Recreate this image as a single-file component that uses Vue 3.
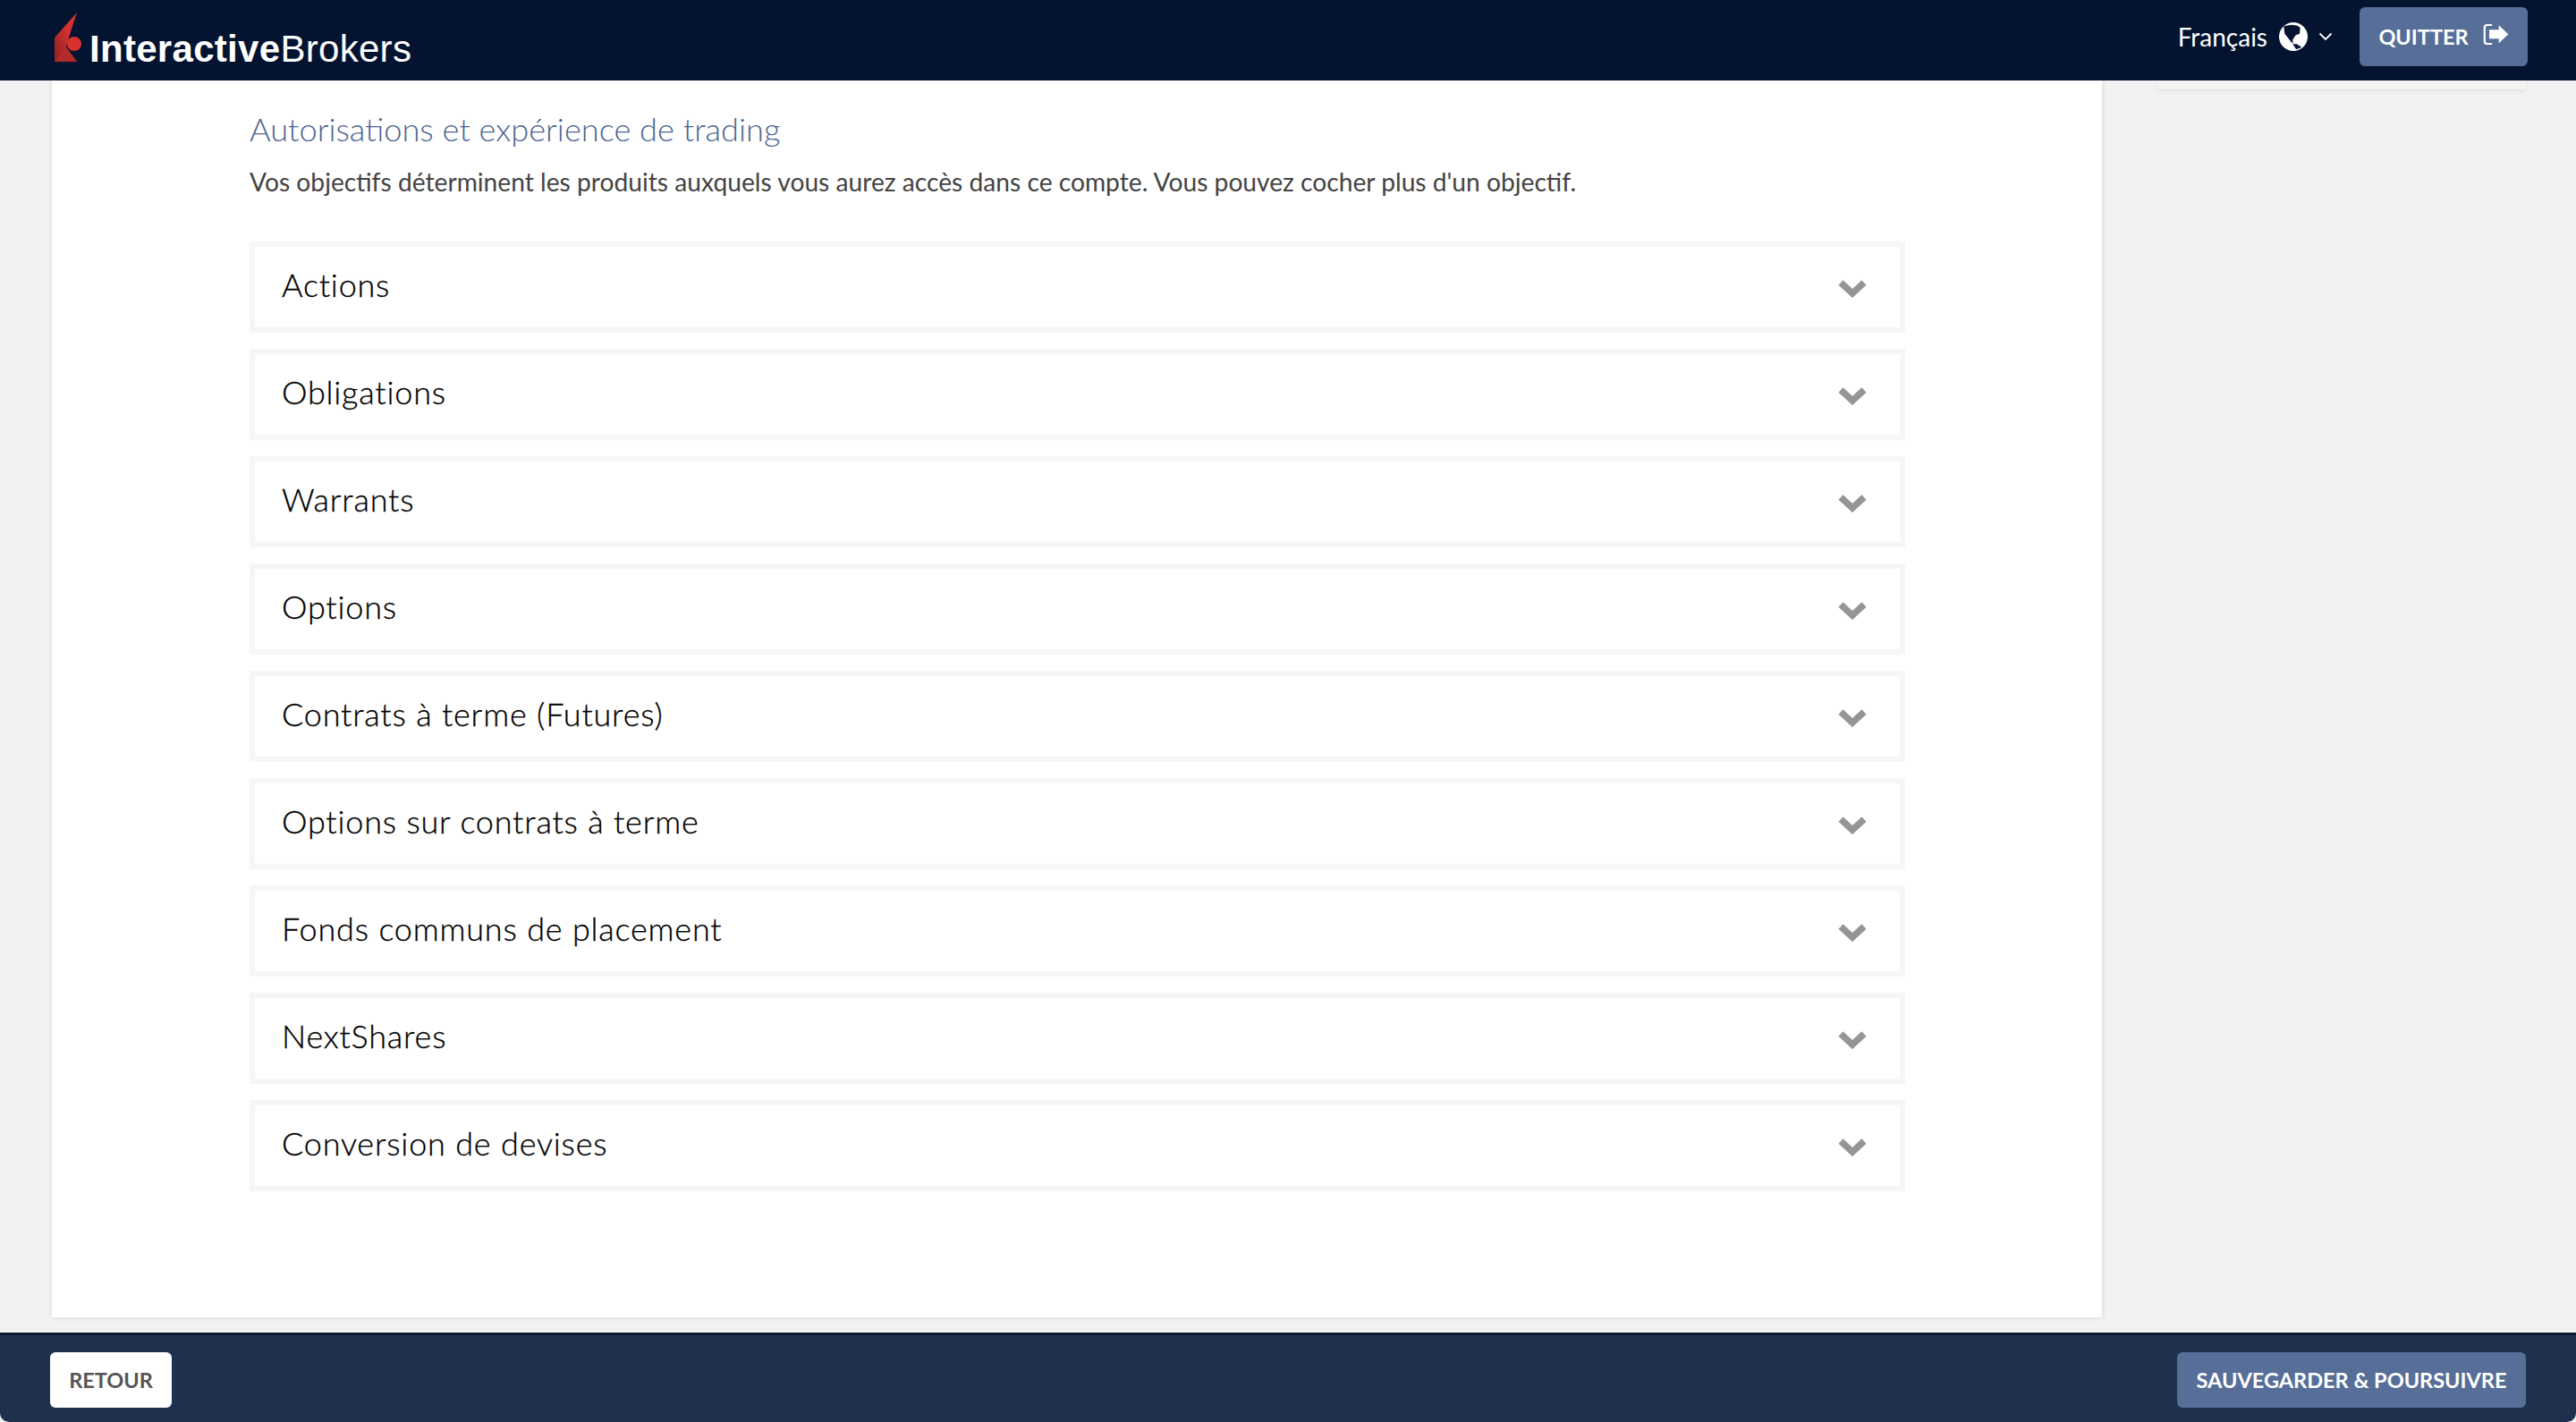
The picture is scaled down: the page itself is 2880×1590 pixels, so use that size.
<script setup>
const rows = [
  'Actions',
  'Obligations',
  'Warrants',
  'Options',
  'Contrats à terme (Futures)',
  'Options sur contrats à terme',
  'Fonds communs de placement',
  'NextShares',
  'Conversion de devises'
]
</script>

<template>
  <div class="page">
    <header class="topbar">
      <div class="brand">
        <svg class="mark" width="33" height="56" viewBox="0 0 33 56">
          <defs>
            <linearGradient id="ibg" x1="0" y1="1" x2="1" y2="0">
              <stop offset="0" stop-color="#8f1f22" />
              <stop offset="0.6" stop-color="#d1312f" />
            </linearGradient>
          </defs>
          <path d="M26 0 L1 28 L1 55 L26 55 L14 39 L17 28 Z" fill="url(#ibg)" />
          <path d="M1 55 L13 37 L26 55 Z" fill="#b32a2a" />
          <circle cx="23" cy="35" r="8" fill="#d9322e" />
        </svg>
        <span class="wordmark"><b>Interactive</b>Brokers</span>
      </div>
      <div class="top-actions">
        <span class="lang">Français</span>
        <svg class="globe" width="32" height="32" viewBox="0 0 32 32">
          <circle cx="16" cy="16" r="16" fill="#fff" />
          <path d="M5.3 4.3 L13.7 2.7 L20 3.5 L23.7 6 L23 12.7 L18.7 14.3 L15.3 19.3 L15.3 24 L10.3 17.7 L6.3 12.7 Z" fill="#031330" />
          <path d="M15.3 24.3 L19.7 24.3 L25.3 27.7 L19.3 30.3 Z" fill="#031330" />
        </svg>
        <svg class="caret" width="16" height="10" viewBox="0 0 16 10">
          <path d="M1.5 1.5 L8 8 L14.5 1.5" fill="none" stroke="#fff" stroke-width="1.8" />
        </svg>
        <button class="btn btn-quit">
          <span>QUITTER</span>
          <svg class="quit-icon" width="29" height="26" viewBox="0 0 29 26">
            <path d="M9.3 2 H4.5 Q1.8 2 1.8 4.7 V20.3 Q1.8 23 4.5 23 H9.3" fill="none" stroke="#fff" stroke-width="2.2" stroke-linecap="round" />
            <path d="M17.7 2.3 L28.3 12.3 L17.7 22.3 V17.3 H7 V7.3 H17.7 Z" fill="#fff" />
          </svg>
        </button>
      </div>
    </header>

    <div class="content">
      <main class="card">
        <h2 class="title">Autorisations et expérience de trading</h2>
        <p class="lead">Vos objectifs déterminent les produits auxquels vous aurez accès dans ce compte. Vous pouvez cocher plus d'un objectif.</p>
        <div class="list">
          <div v-for="row in rows" :key="row" class="row">
            <span class="row-label">{{ row }}</span>
            <svg class="chev" width="34" height="22" viewBox="0 0 34 22">
              <path d="M4 5 L17 17 L30 5" fill="none" stroke="#959595" stroke-width="7.5" stroke-linejoin="miter" />
            </svg>
          </div>
        </div>
      </main>
      <aside class="side"></aside>
    </div>

    <footer class="bottombar">
      <button class="btn btn-back">RETOUR</button>
      <button class="btn btn-save">SAUVEGARDER &amp; POURSUIVRE</button>
    </footer>
  </div>
</template>

<style>
html, body { margin: 0; background: #f2f2f2; }
</style>

<style scoped>
.page {
  width: 2880px;
  height: 1590px;
  display: flex;
  flex-direction: column;
  overflow: hidden;
  font-family: "Lato", "Open Sans", sans-serif;
  background: #f2f2f2;
}
.topbar {
  height: 90px;
  flex: none;
  background: #031330;
  display: flex;
  align-items: center;
  justify-content: space-between;
  padding: 0 54px 0 60px;
  position: relative;
  z-index: 2;
}
.brand { display: flex; align-items: flex-end; height: 90px; }
.mark { margin-bottom: 20px; }
.wordmark {
  font-family: "Liberation Sans", Arial, sans-serif;
  font-size: 42px;
  line-height: 56px;
  color: #fff;
  margin-left: 7px;
  margin-bottom: 7px;
  letter-spacing: 0.3px;
}
.wordmark b { font-weight: 700; }
.top-actions { display: flex; align-items: center; margin-bottom: 8px; }
.lang { color: #fff; font-size: 28px; }
.globe { margin-left: 13px; }
.caret { margin-left: 12px; }
.btn {
  font-family: inherit;
  border: 0;
  border-radius: 6px;
  font-weight: 700;
  font-size: 23.5px;
  padding: 0;
  color: #fff;
}
.btn-quit {
  margin-left: 30px;
  width: 188px;
  height: 66px;
  background: #566e98;
  display: flex;
  align-items: center;
  justify-content: center;
  gap: 16px;
}
.quit-icon { margin-bottom: 5px; }
.content {
  flex: 1;
  display: flex;
  align-items: flex-start;
  min-height: 0;
}
.card {
  margin-left: 58px;
  width: 2292px;
  height: 1383px;
  box-sizing: border-box;
  background: #fff;
  box-shadow: 0 0 6px rgba(0, 0, 0, 0.12);
  padding: 32px 220px 0 221px;
}
.title {
  margin: 0;
  font-size: 36.2px;
  line-height: 44px;
  font-weight: 300;
  color: #4c6490;
}
.lead {
  margin: 17px 0 0;
  font-size: 28.2px;
  line-height: 40px;
  color: #444;
}
.list {
  margin-top: 47px;
  display: flex;
  flex-direction: column;
  gap: 18px;
}
.row {
  height: 102px;
  box-sizing: border-box;
  border: 6px solid #f6f6f6;
  padding: 0 36px 7px 30px;
  display: flex;
  align-items: center;
  justify-content: space-between;
}
.row-label {
  font-size: 36px;
  font-weight: 300;
  color: #000;
  letter-spacing: 0.8px;
  -webkit-text-stroke: 0.3px #000;
}
.chev { margin-top: 8px; }
.side {
  margin-left: 62px;
  width: 412px;
  height: 10px;
  background: #f3f3f3;
  box-shadow: 0 2px 6px rgba(0, 0, 0, 0.07);
}
.bottombar {
  height: 100px;
  flex: none;
  box-sizing: border-box;
  background: #1f2f4e;
  border-top: 3px solid #0a1830;
  border-radius: 0 0 10px 10px;
  display: flex;
  align-items: flex-start;
  justify-content: space-between;
  padding: 19px 56px 0;
}
.btn-back {
  width: 136px;
  height: 62px;
  background: #fff;
  color: #555;
}
.btn-save {
  width: 390px;
  height: 62px;
  background: #566e98;
}
</style>
